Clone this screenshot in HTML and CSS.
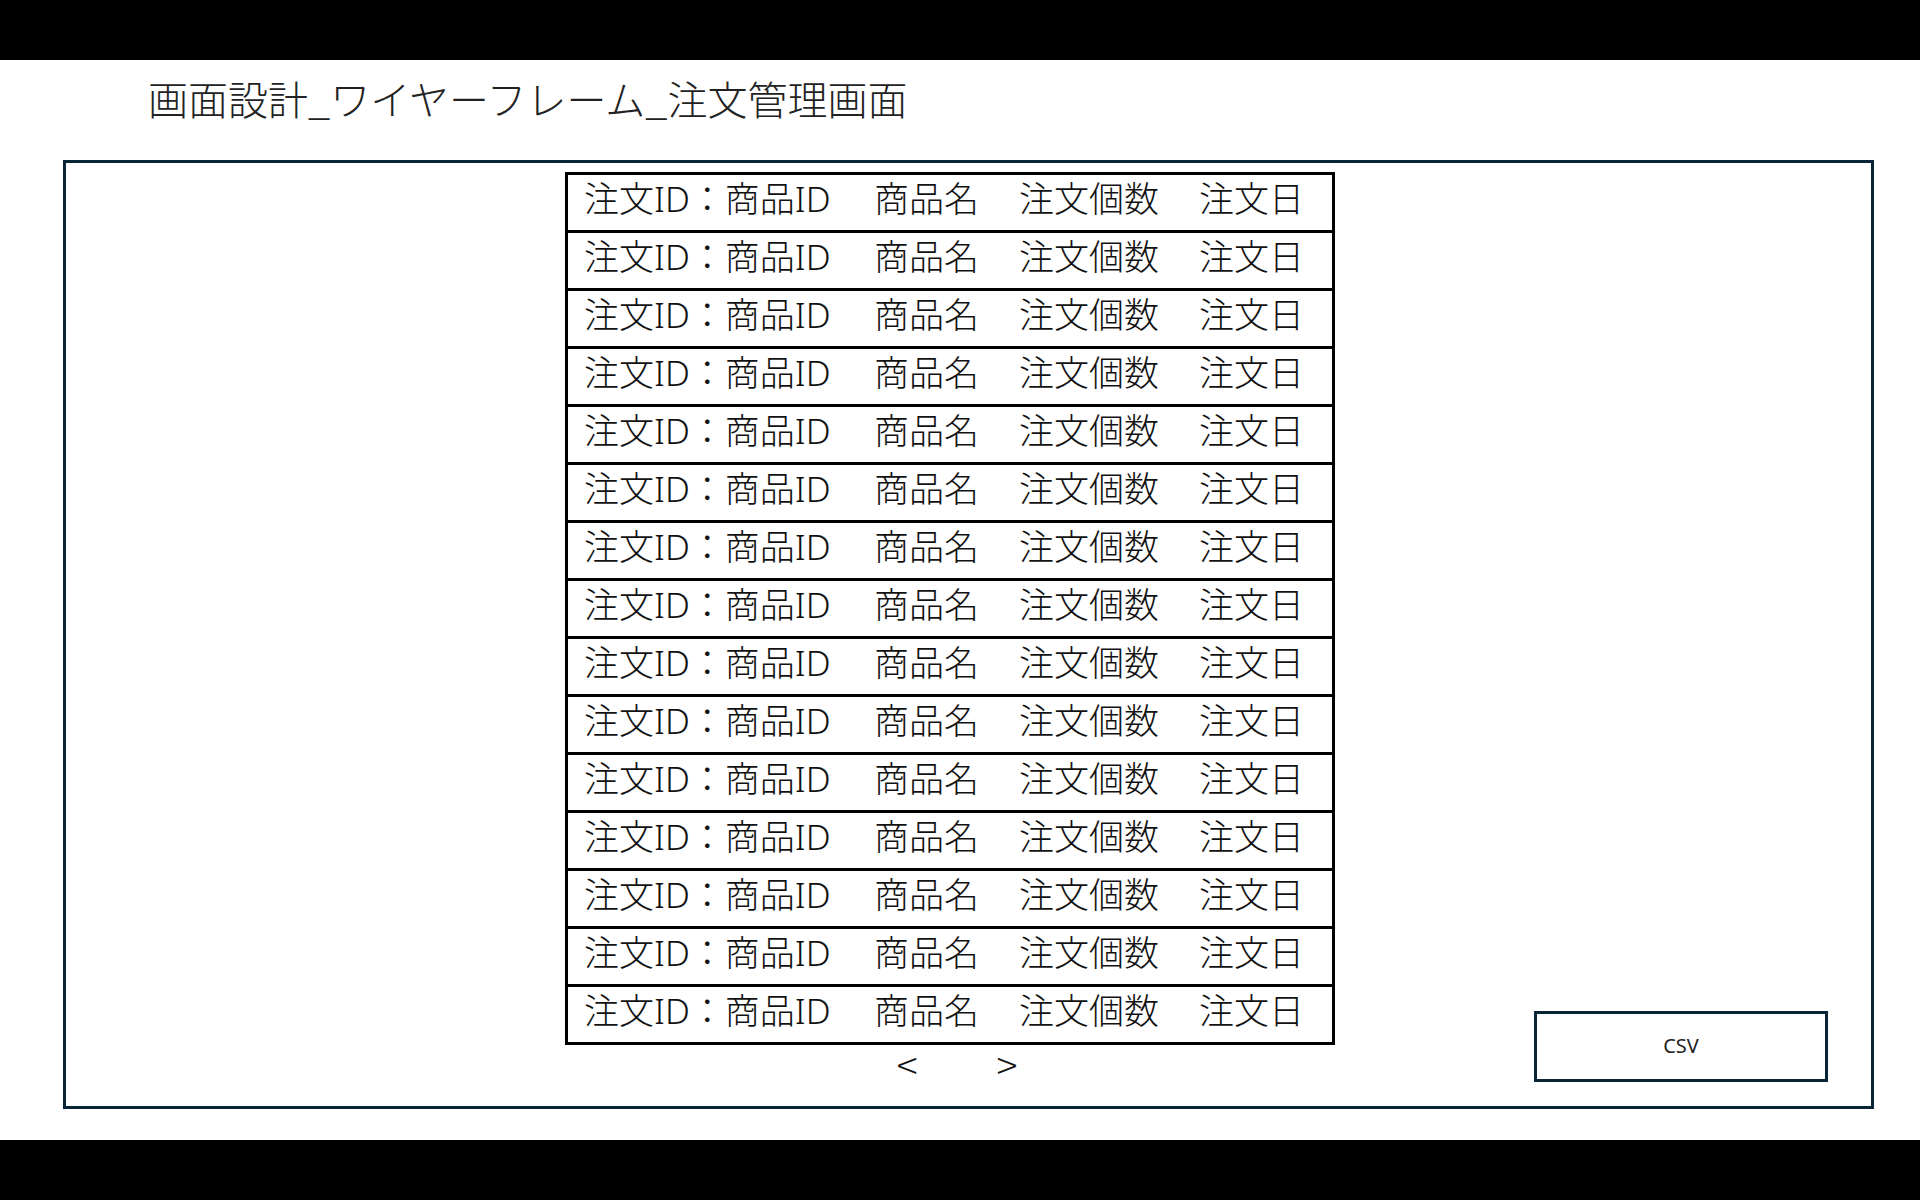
FILE: index.html
```html
<!DOCTYPE html>
<html lang="ja">
<head>
<meta charset="utf-8">
<title>画面設計_ワイヤーフレーム_注文管理画面</title>
<link rel="stylesheet" href="styles.css">
</head>
<body>
<div class="page">
  <div class="bar"></div>
  <header class="title">画面設計_ワイヤーフレーム_注文管理画面</header>
  <main class="frame">
    <section class="list">
      <div class="table">
        <div class="row"><span>注文ID：商品ID</span><span>商品名</span><span>注文個数</span><span>注文日</span></div>
        <div class="row"><span>注文ID：商品ID</span><span>商品名</span><span>注文個数</span><span>注文日</span></div>
        <div class="row"><span>注文ID：商品ID</span><span>商品名</span><span>注文個数</span><span>注文日</span></div>
        <div class="row"><span>注文ID：商品ID</span><span>商品名</span><span>注文個数</span><span>注文日</span></div>
        <div class="row"><span>注文ID：商品ID</span><span>商品名</span><span>注文個数</span><span>注文日</span></div>
        <div class="row"><span>注文ID：商品ID</span><span>商品名</span><span>注文個数</span><span>注文日</span></div>
        <div class="row"><span>注文ID：商品ID</span><span>商品名</span><span>注文個数</span><span>注文日</span></div>
        <div class="row"><span>注文ID：商品ID</span><span>商品名</span><span>注文個数</span><span>注文日</span></div>
        <div class="row"><span>注文ID：商品ID</span><span>商品名</span><span>注文個数</span><span>注文日</span></div>
        <div class="row"><span>注文ID：商品ID</span><span>商品名</span><span>注文個数</span><span>注文日</span></div>
        <div class="row"><span>注文ID：商品ID</span><span>商品名</span><span>注文個数</span><span>注文日</span></div>
        <div class="row"><span>注文ID：商品ID</span><span>商品名</span><span>注文個数</span><span>注文日</span></div>
        <div class="row"><span>注文ID：商品ID</span><span>商品名</span><span>注文個数</span><span>注文日</span></div>
        <div class="row"><span>注文ID：商品ID</span><span>商品名</span><span>注文個数</span><span>注文日</span></div>
        <div class="row"><span>注文ID：商品ID</span><span>商品名</span><span>注文個数</span><span>注文日</span></div>
      </div>
      <nav class="pager"><span>&lt;</span><span>&gt;</span></nav>
    </section>
    <div class="csv">CSV</div>
  </main>
  <div class="gap"></div>
  <div class="bar"></div>
</div>
</body>
</html>
```

FILE: styles.css
```css
html, body {
  margin: 0;
  padding: 0;
  background: #ffffff;
}
body {
  font-family: "Noto Sans CJK JP", "Noto Sans", sans-serif;
  color: #1a1a1a;
}
.page {
  width: 1920px;
  height: 1200px;
  display: flex;
  flex-direction: column;
  overflow: hidden;
}
.bar {
  height: 60px;
  flex: 0 0 60px;
  background: #000000;
}
.title {
  height: 100px;
  flex: 0 0 100px;
  box-sizing: border-box;
  padding: 18px 0 0 148px;
  font-size: 40px;
  line-height: 40px;
  font-weight: 300;
  color: #222222;
  white-space: nowrap;
}
.frame {
  flex: 0 0 949px;
  height: 949px;
  width: 1811px;
  margin-left: 63px;
  box-sizing: border-box;
  border: 3px solid #082537;
  display: flex;
  align-items: flex-start;
  padding: 9px 43px 24px 499px;
}
.list {
  display: flex;
  flex-direction: column;
  width: 770px;
}
.table {
  border: 3px solid #000000;
  display: flex;
  flex-direction: column;
}
.row {
  height: 48px;
  box-sizing: content-box;
  padding: 0 0 7px 16px;
  display: grid;
  grid-template-columns: 290px 145px 180px auto;
  align-items: center;
  font-family: "Noto Sans", "Noto Sans CJK JP", sans-serif;
  font-size: 35px;
  line-height: 44px;
  font-weight: 300;
  color: #111111;
  white-space: nowrap;
}
.row + .row {
  border-top: 3px solid #000000;
}
.pager {
  display: flex;
  justify-content: center;
  gap: 79px;
  padding-left: 14px;
  height: 40px;
  font-size: 39px;
  line-height: 36px;
  font-weight: 300;
  color: #111111;
}
.gap {
  flex: 0 0 31px;
}
.csv {
  margin-left: auto;
  align-self: flex-end;
  width: 294px;
  height: 71px;
  box-sizing: border-box;
  border: 3px solid #082537;
  display: flex;
  align-items: center;
  justify-content: center;
  padding-bottom: 2px;
  font-family: "Noto Sans", "Noto Sans CJK JP", sans-serif;
  font-size: 20px;
  color: #222222;
}
```
